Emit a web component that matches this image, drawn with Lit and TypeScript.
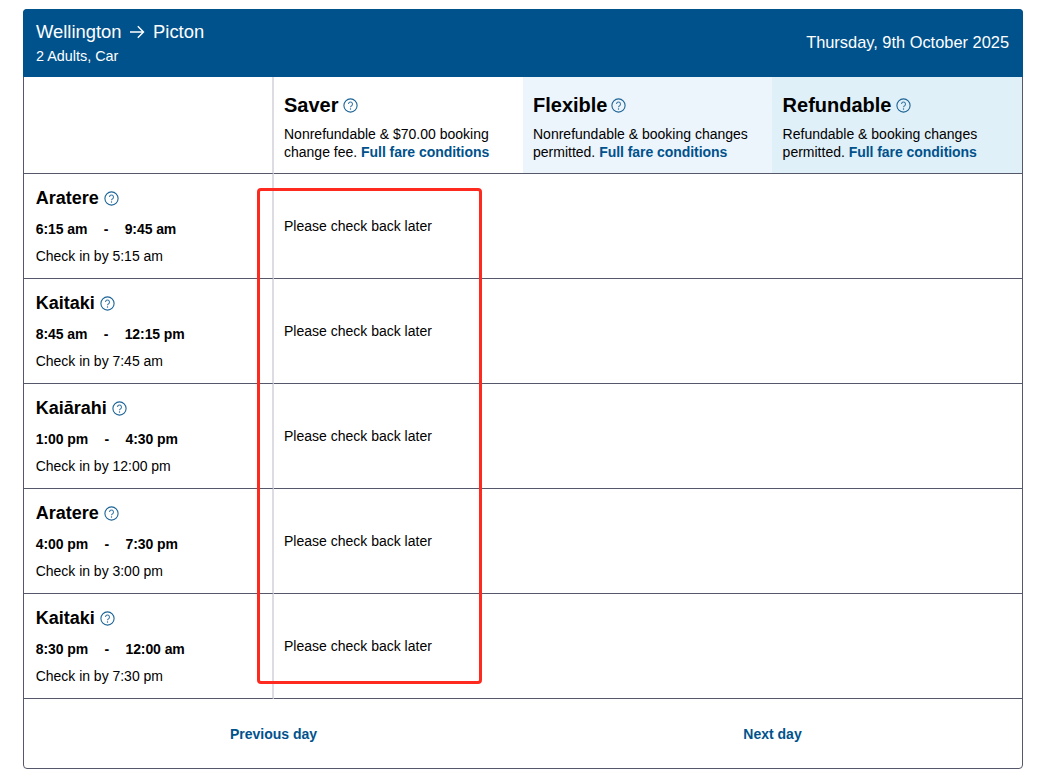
import { LitElement, html, css } from "lit";
import { customElement } from "lit/decorators.js";

const help = html`<svg class="help" viewBox="0 0 15 15" aria-hidden="true">
  <circle cx="7.5" cy="7.5" r="6.6" fill="none" stroke="#1c6496" stroke-width="1.1"></circle>
  <path d="M5.5 6a2 2 0 1 1 3.1 1.7c-.8.5-1.1.9-1.1 1.6" fill="none" stroke="#3f7ca8" stroke-width="1.1"></path>
  <circle cx="7.5" cy="11" r=".7" fill="#1c6496"></circle>
</svg>`;

const sailings = [
  { ship: "Aratere", dep: "6:15 am", arr: "9:45 am", check: "5:15 am" },
  { ship: "Kaitaki", dep: "8:45 am", arr: "12:15 pm", check: "7:45 am" },
  { ship: "Kaiārahi", dep: "1:00 pm", arr: "4:30 pm", check: "12:00 pm" },
  { ship: "Aratere", dep: "4:00 pm", arr: "7:30 pm", check: "3:00 pm" },
  { ship: "Kaitaki", dep: "8:30 pm", arr: "12:00 am", check: "7:30 pm" },
];

const fares = [
  { name: "Saver", desc: "Nonrefundable & $70.00 booking change fee.", cls: "saver" },
  { name: "Flexible", desc: "Nonrefundable & booking changes permitted.", cls: "flexible" },
  { name: "Refundable", desc: "Refundable & booking changes permitted.", cls: "refundable" },
];

@customElement("app-root")
export class AppRoot extends LitElement {
  static styles = css`
    :host {
      display: block;
      font-family: "Liberation Sans", Arial, sans-serif;
      color: #000;
      background: #fff;
      height: 781px;
      box-sizing: border-box;
      padding: 9px 32px 0 23px;
    }
    * { box-sizing: border-box; }
    .card {
      position: relative;
      width: 1000px;
      height: 760px;
      border: 1px solid #55586a;
      border-radius: 4px;
      display: flex;
      flex-direction: column;
    }
    .head {
      margin: -1px -1px 0;
      height: 68px;
      background: #00528c;
      color: #fff;
      border-radius: 4px 4px 0 0;
      display: flex;
      justify-content: space-between;
      padding: 12px 14px 0 13px;
    }
    .route {
      display: flex;
      align-items: center;
      gap: 8px;
      font-size: 18.4px;
      line-height: 21px;
    }
    .route svg { width: 16px; height: 14px; margin: 1px 0 0 -0.5px; }
    .pax { font-size: 14.4px; line-height: 16px; margin-top: 6px; }
    .date { font-size: 16.4px; line-height: 18px; margin-top: 12px; }
    .grid {
      display: grid;
      grid-template-columns: 250px 249px 249px 250px;
    }
    .corner, .label { border-right: 2px solid #dcdce2; }
    .corner { height: 97px; border-bottom: 1px solid #55586a; }
    .fare {
      height: 97px;
      border-bottom: 1px solid #55586a;
      padding: 16px 10px 0 10px;
    }
    .flexible { background: #edf5fc; }
    .refundable { background: #e0f0f8; padding-left: 10.6px; }
    .fare h2 {
      margin: 0;
      font-size: 20px;
      line-height: 24px;
      font-weight: 700;
      display: flex;
      align-items: center;
      gap: 4px;
    }
    .help { width: 15px; height: 15px; flex: none; }
    .fare p {
      margin: 8px 0 0;
      font-size: 14px;
      line-height: 18px;
    }
    a {
      color: #00528c;
      font-weight: 700;
      text-decoration: none;
      cursor: pointer;
    }
    .fare a { letter-spacing: -0.05px; }
    .label {
      height: 105px;
      border-bottom: 1px solid #55586a;
      padding: 13px 0 0 11.7px;
    }
    .ship {
      font-size: 18px;
      line-height: 22px;
      font-weight: 700;
      display: flex;
      align-items: center;
      gap: 5px;
    }
    .times {
      display: flex;
      font-size: 14px;
      line-height: 16px;
      font-weight: 700;
      letter-spacing: -0.08px;
      margin-top: 12px;
    }
    .times span:nth-child(2) { margin: 0 16.4px; }
    .check { font-size: 14px; line-height: 16px; margin-top: 11px; letter-spacing: -0.02px; }
    .cell {
      height: 105px;
      border-bottom: 1px solid #55586a;
      padding: 44px 0 0 10px;
      font-size: 14px;
      line-height: 16px;
    }
    .empty {
      grid-column: span 2;
      height: 105px;
      border-bottom: 1px solid #55586a;
    }
    .foot {
      flex: 1;
      display: grid;
      grid-template-columns: 1fr 1fr;
      align-items: center;
      justify-items: center;
      font-size: 14px;
    }
    .mark {
      position: absolute;
      left: 233px;
      top: 178px;
      width: 225px;
      height: 496px;
      border: 3px solid #ff2a1f;
      border-radius: 4px;
      pointer-events: none;
    }
  `;

  render() {
    return html`
      <div class="card">
        <header class="head">
          <div>
            <div class="route">
              <span>Wellington</span>
              <svg viewBox="0 0 16 14" fill="none" stroke="#fff" stroke-width="1.4" aria-label="to">
                <path d="M1 7h13.5M8.8 1.3 14.5 7l-5.7 5.7"></path>
              </svg>
              <span>Picton</span>
            </div>
            <div class="pax">2 Adults, Car</div>
          </div>
          <div class="date">Thursday, 9th October 2025</div>
        </header>
        <div class="grid">
          <div class="corner"></div>
          ${fares.map(
            (f) => html`<div class="fare ${f.cls}">
              <h2>${f.name} ${help}</h2>
              <p>${f.desc} <a>Full fare conditions</a></p>
            </div>`
          )}
          ${sailings.map(
            (s) => html`
              <div class="label">
                <div class="ship">${s.ship} ${help}</div>
                <div class="times"><span>${s.dep}</span><span>-</span><span>${s.arr}</span></div>
                <div class="check">Check in by ${s.check}</div>
              </div>
              <div class="cell">Please check back later</div>
              <div class="empty"></div>
            `
          )}
        </div>
        <footer class="foot">
          <a>Previous day</a>
          <a>Next day</a>
        </footer>
        <div class="mark"></div>
      </div>
    `;
  }
}
